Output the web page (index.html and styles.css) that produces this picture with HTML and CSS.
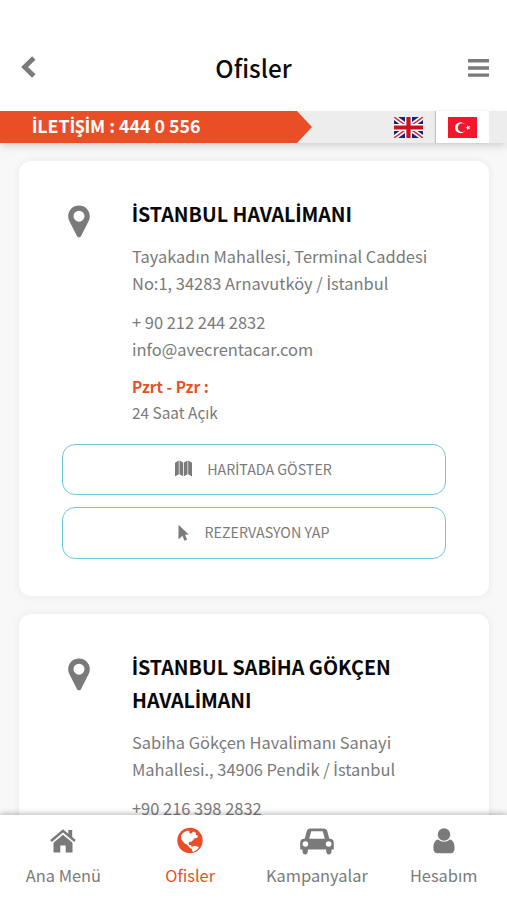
FILE: index.html
```html
<!DOCTYPE html>
<html lang="tr">
<head>
<meta charset="utf-8">
<title>Ofisler</title>
<link rel="stylesheet" href="styles.css">
</head>
<body>
<div class="app">
  <header class="header">
    <svg class="back" viewBox="0 0 16 22"><path d="M12.8 2 3.600 11l9.200 9" fill="none" stroke="currentColor" stroke-width="4.800"/></svg>
    <h1 class="title">Ofisler</h1>
    <svg class="menu" viewBox="0 0 21 18"><path d="M0 1.800h21M0 9h21M0 16.100h21" fill="none" stroke="currentColor" stroke-width="3.400"/></svg>
  </header>
  <div class="contact-bar">
    <a class="phone"><span class="dotted">İ</span>LET<span class="dotted">İ</span>Ş<span class="dotted">İ</span>M : 444 0 556</a>
    <div class="languages">
      <span class="lang">
        <svg class="flag" viewBox="0 0 29 21"><path fill="#1b2379" d="M0 0h29v21H0z"/><path d="m0 0 29 21M29 0 0 21" stroke="#fff" stroke-width="4.800"/><path d="m0 0 12 8.700M29 0 17 8.700M0 21l12-8.700M29 21l-12-8.700" stroke="#d6303d" stroke-width="1.500"/><path d="M14.500 0v21M0 10.500h29" stroke="#fff" stroke-width="7"/><path d="M14.500 0v21M0 10.500h29" stroke="#cb1020" stroke-width="4.200"/></svg>
      </span>
      <span class="lang lang-active">
        <svg class="flag" viewBox="0 0 29 21"><path fill="#f5152d" d="M0 0h29v21H0z"/><circle cx="12.500" cy="10.700" r="5.500" fill="#fff"/><circle cx="14.200" cy="10.700" r="4.400" fill="#f5152d"/><path fill="#fff" d="m17.400 10.700 1.800-.7.100-1.800 1.200 1.400 1.800-.5-1 1.600 1 1.500-1.800-.4-1.200 1.400-.1-1.800z"/></svg>
      </span>
    </div>
  </div>
  <main class="offices">
    <article class="card">
      <div class="office">
        <svg class="pin" viewBox="0 0 22 33"><path fill="currentColor" fill-rule="evenodd" d="M11 .5C5 .5.2 5.200.2 11.200c0 1.700.3 3.300 1 4.600l7.600 15c.9 2 3.500 2 4.400 0l7.600-15c.7-1.300 1-2.900 1-4.600C21.800 5.200 17 .5 11 .5zm0 5.200a5.500 5.500 0 1 1 0 11 5.500 5.500 0 0 1 0-11z"/></svg>
        <div class="details">
          <h2 class="name"><span class="dotted">İ</span>STANBUL HAVAL<span class="dotted">İ</span>MANI</h2>
          <p class="address">Tayakadın Mahallesi, Terminal Caddesi<br>No:1, 34283 Arnavutköy / <span class="dotted">İ</span>stanbul</p>
          <p class="reach">+ 90 212 244 2832<br>info@avecrentacar.com</p>
          <p class="hours"><b>Pzrt - Pzr :</b><br>24 Saat Açık</p>
        </div>
      </div>
      <div class="actions">
        <a class="button"><svg class="map-icon" viewBox="0 0 17 17"><path fill="currentColor" d="M0 2.800 3.800.5v13.700L0 16.500zM4.500.5l3.700 2.100v13.600l-3.700-2zM9 2.600 12.500.5v13.700L9 16.200zM13.200.5 17 2.800v13.700l-3.800-2.300z"/></svg><span>HAR<span class="dotted">İ</span>TADA GÖSTER</span></a>
        <a class="button"><svg class="cursor-icon" viewBox="0 0 11 17"><path fill="currentColor" d="M.5.700 10.700 10.500 7 10.800l2.100 4.700-2.600 1.200-2.100-4.900-3.400 3.200c-.3.200-.5.100-.5-.2z"/></svg><span>REZERVASYON YAP</span></a>
      </div>
    </article>
    <article class="card">
      <div class="office">
        <svg class="pin" viewBox="0 0 22 33"><path fill="currentColor" fill-rule="evenodd" d="M11 .5C5 .5.2 5.200.2 11.200c0 1.700.3 3.300 1 4.600l7.600 15c.9 2 3.500 2 4.400 0l7.600-15c.7-1.300 1-2.900 1-4.600C21.800 5.200 17 .5 11 .5zm0 5.200a5.500 5.500 0 1 1 0 11 5.500 5.500 0 0 1 0-11z"/></svg>
        <div class="details">
          <h2 class="name"><span class="dotted">İ</span>STANBUL SAB<span class="dotted">İ</span>HA GÖKÇEN<br>HAVAL<span class="dotted">İ</span>MANI</h2>
          <p class="address">Sabiha Gökçen Havalimanı Sanayi<br>Mahallesi., 34906 Pendik / <span class="dotted">İ</span>stanbul</p>
          <p class="reach">+90 216 398 2832</p>
        </div>
      </div>
    </article>
  </main>
  <nav class="tabs">
    <a class="tab"><svg class="tab-icon" viewBox="0 0 34 28"><path d="M5 14 17 3.800 29 14" fill="none" stroke="currentColor" stroke-width="2.500"/><path fill="currentColor" d="M22.300 3h3.900v8l-3.900-3.200zM17 7.800l9.500 8v9.600h-6.800v-7h-5.400v7H7.500v-9.600z"/></svg><span>Ana Menü</span></a>
    <a class="tab tab-active"><svg class="tab-icon" viewBox="0 0 34 28"><circle cx="17" cy="13.500" r="12.700" fill="currentColor"/><path fill="#fff" d="M8 8.500c1.600-2.600 4-4.300 7-5l1.700 1.200-.4 1.300 1.700.8 2.200-2.300 3 1.400-.6 1.600 2.200 1.300-.4 2-2.700.5-3 3.300-2.300.5-1 2 1 1 1.700.1.900 2.500 2 .7-.5 1-3.600-1.500-2.500-2.800-3.300-2.100-2.600-3.600zM19.300 19.500l2.400-.8 4.300 1.300-1.700 2.600-4.500 2.600-.9-2.600z"/></svg><span>Ofisler</span></a>
    <a class="tab"><svg class="tab-icon" viewBox="0 0 34 28"><path fill="currentColor" fill-rule="evenodd" d="M10.500 1.500h13c2 0 3.300.9 3.800 2.800l2 7.500h.7c2.200 0 3.800 1.500 3.800 3.700v7h-2.300v2c0 3.900-5.300 3.900-5.300 0v-2H7.800v2c0 3.900-5.300 3.900-5.300 0v-2H.2v-7c0-2.200 1.600-3.700 3.800-3.700h.7l2-7.500c.5-1.900 1.800-2.800 3.800-2.800zm.6 3.200-1.900 7.100h15.600l-1.900-7.100c-.1-.4-.3-.5-.7-.5H11.800c-.4 0-.6.100-.7.500zM5.400 14.200a2.800 2.800 0 1 0 0 5.600 2.800 2.800 0 0 0 0-5.600zm23.200 0a2.800 2.800 0 1 0 0 5.600 2.800 2.800 0 0 0 0-5.600z"/></svg><span>Kampanyalar</span></a>
    <a class="tab"><svg class="tab-icon" viewBox="0 0 34 28"><circle cx="17" cy="7.500" r="6.200" fill="currentColor"/><path fill="currentColor" d="M11.300 12.600c3.200 2.900 8.200 2.900 11.400 0 3.500.4 4.900 4 4.900 8.600 0 3-1.400 5-4.100 5h-13c-2.700 0-4.100-2-4.100-5 0-4.600 1.400-8.200 4.900-8.600z"/></svg><span>Hesabım</span></a>
  </nav>
</div>
</body>
</html>
```
FILE: styles.css
```css
* { box-sizing: border-box; margin: 0; padding: 0; }
body {
  background: #f8f8f8;
  color: #7a7a7a;
  font-family: "Noto Sans CJK SC", "Noto Sans", sans-serif;
}
svg { display: block; flex: none; }
/* The CJK family has no dotted capital I of its own. */
.dotted { font-family: Roboto, sans-serif; font-size: 1.03em; line-height: 1; }
.app { display: flex; flex-direction: column; height: 900px; overflow: hidden; }
.header {
  display: flex; align-items: center; justify-content: space-between;
  flex: none; height: 111px; padding: 25px 18px 0 21px; background: #fff;
}
.back { width: 16px; height: 22px; margin-top: -2px; }
.menu { width: 21px; height: 18px; }
.title { margin: 0 0 0 2px; color: #0c0c0c; font-size: 24.300px; font-weight: 500; line-height: 36px; }
.contact-bar {
  position: relative; z-index: 1;
  display: flex; justify-content: space-between;
  flex: none; height: 32px; background: #ededed;
  box-shadow: 0 4px 8px -1px rgba(0, 0, 0, .16);
}
.phone {
  width: 312px; padding-left: 32px; background: #e94e27; color: #fff;
  font-size: 17.750px; font-weight: 700; line-height: 28px;
  clip-path: polygon(0 0, 297px 0, 100% 50%, 297px 100%, 0 100%);
}
.languages { display: flex; padding-right: 18px; }
.lang { display: flex; align-items: center; justify-content: center; width: 54px; }
.lang-active { width: 53px; padding-right: 1px; background: #fff; box-shadow: -1px 0 1px rgba(0, 0, 0, .18); }
.lang:first-child { padding-right: 1px; }
.flag { width: 29px; height: 21px; }
.offices {
  display: flex; flex-direction: column; gap: 18px;
  flex: 1; min-height: 0; overflow: hidden; padding: 18px 18px 0 19px;
}
.card {
  flex: none; height: 435px; padding: 36px 43px 0;
  background: #fff; border-radius: 12px;
  box-shadow: 0 0 9px rgba(0, 0, 0, .065);
}
.office { display: flex; }
.pin { width: 22px; height: 33px; margin: 8px 42px 0 6px; }
.name { color: #080808; font-size: 19.700px; font-weight: 700; line-height: 33px; }
.address, .reach { font-size: 16.450px; line-height: 27px; }
.address { margin-top: 13px; }
.reach { margin-top: 12px; }
.hours { margin-top: 10px; font-size: 15.400px; line-height: 26px; }
.hours b { color: #e94e27; }
.actions { display: flex; flex-direction: column; gap: 12px; margin-top: 18.500px; }
.button {
  display: flex; align-items: center; justify-content: center; gap: 15px;
  height: 51.500px; padding: 0 1px 1px 0; border: 1px solid #6fcad8; border-radius: 13px;
  font-size: 14.250px; line-height: 22px;
}
.map-icon { width: 17px; height: 17px; }
.cursor-icon { width: 11px; height: 17px; margin-right: 1px; }
.tabs {
  position: relative; z-index: 1;
  display: flex; flex: none; height: 85px; background: #fff;
  box-shadow: 0 -1px 6px rgba(0, 0, 0, .3);
}
.tab {
  display: flex; flex-direction: column; align-items: center; gap: 7px;
  flex: 1; padding-top: 12px; font-size: 16.400px; line-height: 27px;
}
.tab-active { color: #e94e27; }
.tab-icon { width: 34px; height: 28px; }
```
